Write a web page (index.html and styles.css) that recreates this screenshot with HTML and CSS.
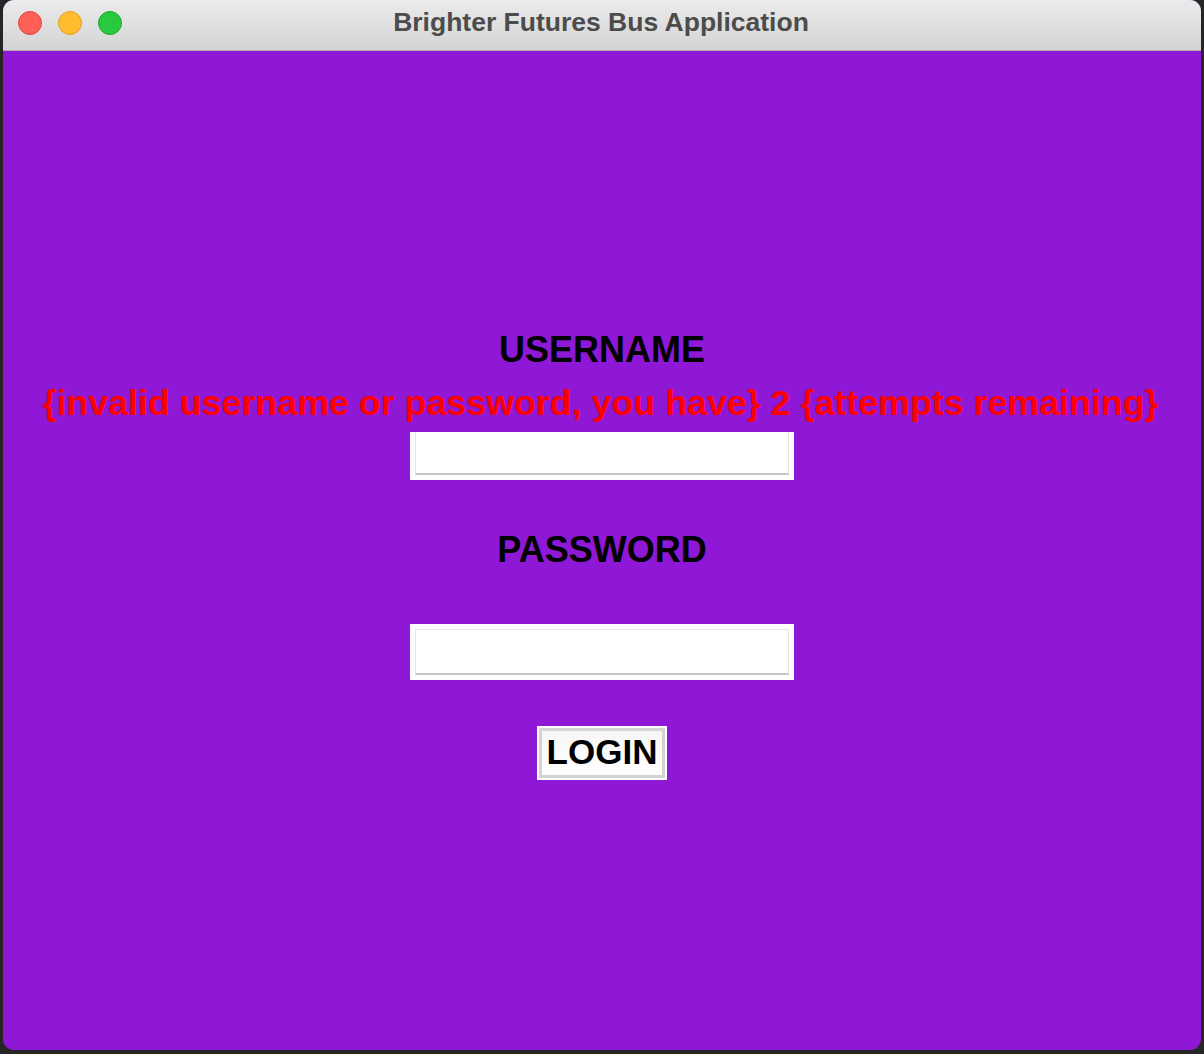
FILE: index.html
```html
<!DOCTYPE html>
<html lang="en">
<head>
<meta charset="utf-8">
<title>Brighter Futures Bus Application</title>
<link rel="stylesheet" href="styles.css">
</head>
<body>
<div class="window">
  <div class="titlebar">
    <div class="lights">
      <span class="light red"></span>
      <span class="light yellow"></span>
      <span class="light green"></span>
    </div>
    <div class="title">Brighter Futures Bus Application</div>
  </div>
  <div class="content">
    <div class="label user-label">USERNAME</div>
    <div class="error">{invalid username or password, you have} 2 {attempts remaining}</div>
    <div class="entry entry-user"><div class="field"></div></div>
    <div class="label pass-label">PASSWORD</div>
    <div class="entry entry-pass"><div class="field"></div></div>
    <div class="button-wrap"><div class="button">LOGIN</div></div>
  </div>
</div>
</body>
</html>
```

FILE: styles.css
```css
html, body {
  margin: 0;
  padding: 0;
  background: #262626;
  width: 1204px;
  height: 1054px;
  overflow: hidden;
}

.window {
  margin-left: 3px;
  width: 1198px;
  height: 1050px;
  border-radius: 11px;
  overflow: hidden;
  display: flex;
  flex-direction: column;
  background: #8e18d6;
}

.titlebar {
  position: relative;
  height: 50px;
  flex: none;
  background: linear-gradient(#ebebeb, #d4d4d4);
  border-bottom: 1px solid #b0b0b0;
  display: flex;
  align-items: center;
  justify-content: center;
}

.lights {
  position: absolute;
  left: 15px;
  top: 11px;
  display: flex;
  gap: 16px;
}

.light {
  width: 22px;
  height: 22px;
  border-radius: 50%;
  display: block;
  border: 1px solid;
}

.red { background: #fe5f57; border-color: #e1453f; }
.yellow { background: #febc2e; border-color: #dfa023; }
.green { background: #28c840; border-color: #1ca92c; }

.title {
  font-family: "Liberation Sans", Arial, sans-serif;
  font-weight: bold;
  font-size: 26.5px;
  color: #4c4c4c;
  margin-left: -2px;
  margin-top: -5px;
}

.content {
  flex: 1;
  display: flex;
  flex-direction: column;
  align-items: center;
  font-family: "Liberation Sans", Arial, sans-serif;
  font-weight: bold;
}

.label {
  font-size: 36px;
  line-height: 36px;
  color: #000;
  white-space: nowrap;
}

.user-label {
  margin-top: 281px;
}

.error {
  font-size: 35.8px;
  line-height: 36px;
  color: #ff0000;
  white-space: nowrap;
  margin-top: 17px;
  margin-bottom: 3px;
  margin-left: -3px;
}

.entry {
  width: 384px;
  background: #fff;
  box-sizing: border-box;
}

.entry-user {
  margin-top: 8px;
  height: 48px;
  padding: 0 5px 5px;
}

.entry-pass {
  margin-top: 56px;
  height: 56px;
  padding: 5px 5px 5px;
}

.field {
  height: 100%;
  box-sizing: border-box;
  border: 1px solid #e6e6e6;
  border-bottom: 2px solid #c6c6c6;
  background: #fff;
}

.entry-user .field {
  border-top: none;
}

.pass-label {
  margin-top: 52px;
}

.button-wrap {
  margin-top: 46px;
  background: #fff;
  padding: 2px;
  width: 130px;
  height: 54px;
  box-sizing: border-box;
}

.button {
  height: 100%;
  box-sizing: border-box;
  border: 3px solid #d3d3d3;
  background: linear-gradient(#f6f6f6, #ffffff);
  font-size: 35px;
  line-height: 42px;
  color: #000;
  text-align: center;
}
```
